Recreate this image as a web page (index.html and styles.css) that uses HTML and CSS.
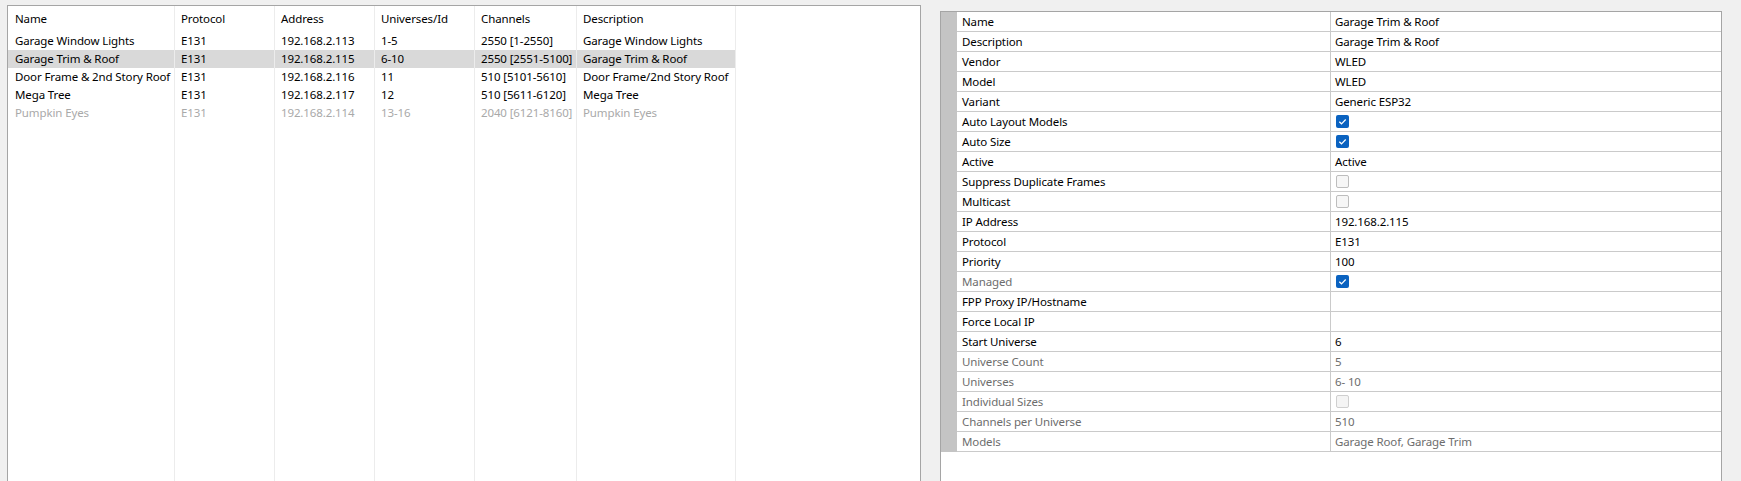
FILE: index.html
```html
<!DOCTYPE html>
<html lang="en">
<head>
<meta charset="utf-8">
<title>Controllers</title>
<link rel="stylesheet" href="styles.css">
</head>
<body>
<div class="app">
  <div class="list">
    <div class="col c-name">
      <div class="hd">Name</div>
      <div class="cell">Garage Window Lights</div>
      <div class="cell sel">Garage Trim &amp; Roof</div>
      <div class="cell">Door Frame &amp; 2nd Story Roof</div>
      <div class="cell">Mega Tree</div>
      <div class="cell dis">Pumpkin Eyes</div>
    </div>
    <div class="col c-w100">
      <div class="hd">Protocol</div>
      <div class="cell">E131</div>
      <div class="cell sel">E131</div>
      <div class="cell">E131</div>
      <div class="cell">E131</div>
      <div class="cell dis">E131</div>
    </div>
    <div class="col c-w100">
      <div class="hd">Address</div>
      <div class="cell">192.168.2.113</div>
      <div class="cell sel">192.168.2.115</div>
      <div class="cell">192.168.2.116</div>
      <div class="cell">192.168.2.117</div>
      <div class="cell dis">192.168.2.114</div>
    </div>
    <div class="col c-w100">
      <div class="hd">Universes/Id</div>
      <div class="cell">1-5</div>
      <div class="cell sel">6-10</div>
      <div class="cell">11</div>
      <div class="cell">12</div>
      <div class="cell dis">13-16</div>
    </div>
    <div class="col c-ch">
      <div class="hd">Channels</div>
      <div class="cell">2550 [1-2550]</div>
      <div class="cell sel">2550 [2551-5100]</div>
      <div class="cell">510 [5101-5610]</div>
      <div class="cell">510 [5611-6120]</div>
      <div class="cell dis">2040 [6121-8160]</div>
    </div>
    <div class="col c-desc">
      <div class="hd">Description</div>
      <div class="cell">Garage Window Lights</div>
      <div class="cell sel">Garage Trim &amp; Roof</div>
      <div class="cell">Door Frame/2nd Story Roof</div>
      <div class="cell">Mega Tree</div>
      <div class="cell dis">Pumpkin Eyes</div>
    </div>
  </div>

  <div class="props">
    <div class="pg">
      <div class="row"><div class="k">Name</div><div class="v">Garage Trim &amp; Roof</div></div>
      <div class="row"><div class="k">Description</div><div class="v">Garage Trim &amp; Roof</div></div>
      <div class="row"><div class="k">Vendor</div><div class="v">WLED</div></div>
      <div class="row"><div class="k">Model</div><div class="v">WLED</div></div>
      <div class="row"><div class="k">Variant</div><div class="v">Generic ESP32</div></div>
      <div class="row"><div class="k">Auto Layout Models</div><div class="v"><span class="cb on"><svg viewBox="0 0 13 13" width="13" height="13"><path d="M3.3 6.7 L5.5 8.8 L9.7 4.5" fill="none" stroke="#fff" stroke-width="1.2"/></svg></span></div></div>
      <div class="row"><div class="k">Auto Size</div><div class="v"><span class="cb on"><svg viewBox="0 0 13 13" width="13" height="13"><path d="M3.3 6.7 L5.5 8.8 L9.7 4.5" fill="none" stroke="#fff" stroke-width="1.2"/></svg></span></div></div>
      <div class="row"><div class="k">Active</div><div class="v">Active</div></div>
      <div class="row"><div class="k">Suppress Duplicate Frames</div><div class="v"><span class="cb"></span></div></div>
      <div class="row"><div class="k">Multicast</div><div class="v"><span class="cb"></span></div></div>
      <div class="row"><div class="k">IP Address</div><div class="v">192.168.2.115</div></div>
      <div class="row"><div class="k">Protocol</div><div class="v">E131</div></div>
      <div class="row"><div class="k">Priority</div><div class="v">100</div></div>
      <div class="row dis"><div class="k">Managed</div><div class="v"><span class="cb on"><svg viewBox="0 0 13 13" width="13" height="13"><path d="M3.3 6.7 L5.5 8.8 L9.7 4.5" fill="none" stroke="#fff" stroke-width="1.2"/></svg></span></div></div>
      <div class="row"><div class="k">FPP Proxy IP/Hostname</div><div class="v"></div></div>
      <div class="row"><div class="k">Force Local IP</div><div class="v"></div></div>
      <div class="row"><div class="k">Start Universe</div><div class="v">6</div></div>
      <div class="row dis"><div class="k">Universe Count</div><div class="v">5</div></div>
      <div class="row dis"><div class="k">Universes</div><div class="v">6- 10</div></div>
      <div class="row dis"><div class="k">Individual Sizes</div><div class="v"><span class="cb off"></span></div></div>
      <div class="row dis"><div class="k">Channels per Universe</div><div class="v">510</div></div>
      <div class="row dis"><div class="k">Models</div><div class="v">Garage Roof, Garage Trim</div></div>
    </div>
  </div>
</div>
</body>
</html>
```

FILE: styles.css
```css
html, body {
  margin: 0;
  height: 100%;
  overflow: hidden;
}

body {
  background: #f0f0f0;
  font-family: "Noto Sans", "Open Sans", sans-serif;
  font-size: 11.5px;
  letter-spacing: -0.12px;
  color: #000;
}

.app {
  display: flex;
  gap: 19px;
  padding-left: 7px;
  height: 100vh;
  box-sizing: border-box;
}

/* ---------- left list ---------- */
.list {
  margin-top: 5px;
  width: 914px;
  box-sizing: border-box;
  border: 1px solid #a5a5a5;
  border-bottom: none;
  background: #fff;
  display: flex;
}

.col {
  box-sizing: border-box;
  border-right: 1px solid #ececec;
  display: flex;
  flex-direction: column;
}

.c-name { width: 167px; }
.c-w100 { width: 100px; }
.c-ch { width: 102px; }
.c-desc { width: 159px; }

.hd {
  height: 26px;
  line-height: 26px;
  padding-left: 6px;
  white-space: nowrap;
  overflow: hidden;
}

.cell {
  height: 18px;
  line-height: 18px;
  padding-left: 6px;
  white-space: nowrap;
  overflow: hidden;
}

.c-name .hd,
.c-name .cell { padding-left: 7px; }

.sel { background: #d9d9d9; }
.cell.dis { color: #a9a9a9; }

/* ---------- property grid ---------- */
.props {
  margin-top: 11px;
  width: 782px;
  box-sizing: border-box;
  border: 1px solid #a5a5a5;
  border-bottom: none;
  background: #fff;
}

.pg {
  border-left: 16px solid #c4c4c4;
}

.row {
  display: flex;
  height: 20px;
  box-sizing: border-box;
  border-bottom: 1px solid #cacaca;
  line-height: 19px;
}

.k {
  width: 374px;
  box-sizing: border-box;
  border-right: 1px solid #cacaca;
  padding-left: 5px;
  white-space: nowrap;
}

.v {
  flex: 1;
  padding-left: 4px;
  white-space: nowrap;
  display: flex;
  align-items: center;
}

.row.dis .k,
.row.dis .v { color: #6d6d6d; }

.cb {
  width: 13px;
  height: 13px;
  box-sizing: border-box;
  border: 1px solid #bdbdbd;
  border-radius: 2px;
  background: #f6f6f6;
  margin-left: 1px;
  display: block;
}

.cb.off {
  border-color: #cfcfcf;
  background: #f4f4f4;
}

.cb.on {
  border: none;
  background: #0a62c0;
}

.cb svg { display: block; }
```
